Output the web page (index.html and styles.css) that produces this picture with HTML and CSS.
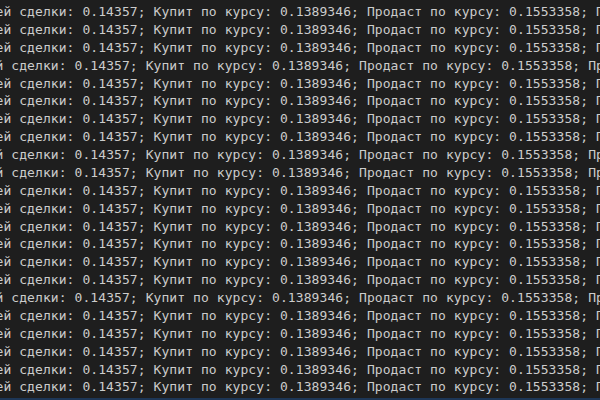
FILE: index.html
```html
<!DOCTYPE html>
<html lang="ru">
<head>
<meta charset="utf-8">
<title>Console</title>
<link rel="stylesheet" href="styles.css">
</head>
<body>
<div class="console">
<div class="line">ей сделки: 0.14357; Купит по курсу: 0.1389346; Продаст по курсу: 0.1553358; Пр</div>
<div class="line">ей сделки: 0.14357; Купит по курсу: 0.1389346; Продаст по курсу: 0.1553358; Пр</div>
<div class="line">ей сделки: 0.14357; Купит по курсу: 0.1389346; Продаст по курсу: 0.1553358; Пр</div>
<div class="line shift">ей сделки: 0.14357; Купит по курсу: 0.1389346; Продаст по курсу: 0.1553358; Пр</div>
<div class="line">ей сделки: 0.14357; Купит по курсу: 0.1389346; Продаст по курсу: 0.1553358; Пр</div>
<div class="line">ей сделки: 0.14357; Купит по курсу: 0.1389346; Продаст по курсу: 0.1553358; Пр</div>
<div class="line">ей сделки: 0.14357; Купит по курсу: 0.1389346; Продаст по курсу: 0.1553358; Пр</div>
<div class="line">ей сделки: 0.14357; Купит по курсу: 0.1389346; Продаст по курсу: 0.1553358; Пр</div>
<div class="line shift">ей сделки: 0.14357; Купит по курсу: 0.1389346; Продаст по курсу: 0.1553358; Пр</div>
<div class="line shift">ей сделки: 0.14357; Купит по курсу: 0.1389346; Продаст по курсу: 0.1553358; Пр</div>
<div class="line">ей сделки: 0.14357; Купит по курсу: 0.1389346; Продаст по курсу: 0.1553358; Пр</div>
<div class="line">ей сделки: 0.14357; Купит по курсу: 0.1389346; Продаст по курсу: 0.1553358; Пр</div>
<div class="line">ей сделки: 0.14357; Купит по курсу: 0.1389346; Продаст по курсу: 0.1553358; Пр</div>
<div class="line">ей сделки: 0.14357; Купит по курсу: 0.1389346; Продаст по курсу: 0.1553358; Пр</div>
<div class="line">ей сделки: 0.14357; Купит по курсу: 0.1389346; Продаст по курсу: 0.1553358; Пр</div>
<div class="line">ей сделки: 0.14357; Купит по курсу: 0.1389346; Продаст по курсу: 0.1553358; Пр</div>
<div class="line shift">ей сделки: 0.14357; Купит по курсу: 0.1389346; Продаст по курсу: 0.1553358; Пр</div>
<div class="line">ей сделки: 0.14357; Купит по курсу: 0.1389346; Продаст по курсу: 0.1553358; Пр</div>
<div class="line">ей сделки: 0.14357; Купит по курсу: 0.1389346; Продаст по курсу: 0.1553358; Пр</div>
<div class="line">ей сделки: 0.14357; Купит по курсу: 0.1389346; Продаст по курсу: 0.1553358; Пр</div>
<div class="line">ей сделки: 0.14357; Купит по курсу: 0.1389346; Продаст по курсу: 0.1553358; Пр</div>
<div class="line">ей сделки: 0.14357; Купит по курсу: 0.1389346; Продаст по курсу: 0.1553358; Пр</div>
</div>
</body>
</html>
```
FILE: styles.css
```css
html, body {
  margin: 0;
  padding: 0;
  background: #1e1e1e;
}
.console {
  box-sizing: border-box;
  width: 600px;
  height: 400px;
  overflow: hidden;
  padding-top: 3px;
  background: #1e1e1e;
  border-bottom: 2px solid #1d3656;
  color: #cccccc;
  font-family: "DejaVu Sans Mono", "Liberation Mono", monospace;
  font-size: 13px;
  letter-spacing: 0.075px;
  line-height: 17.88px;
}
.line {
  white-space: pre;
  margin-left: -4.5px;
}
.line.shift {
  margin-left: -12.4px;
}
```
